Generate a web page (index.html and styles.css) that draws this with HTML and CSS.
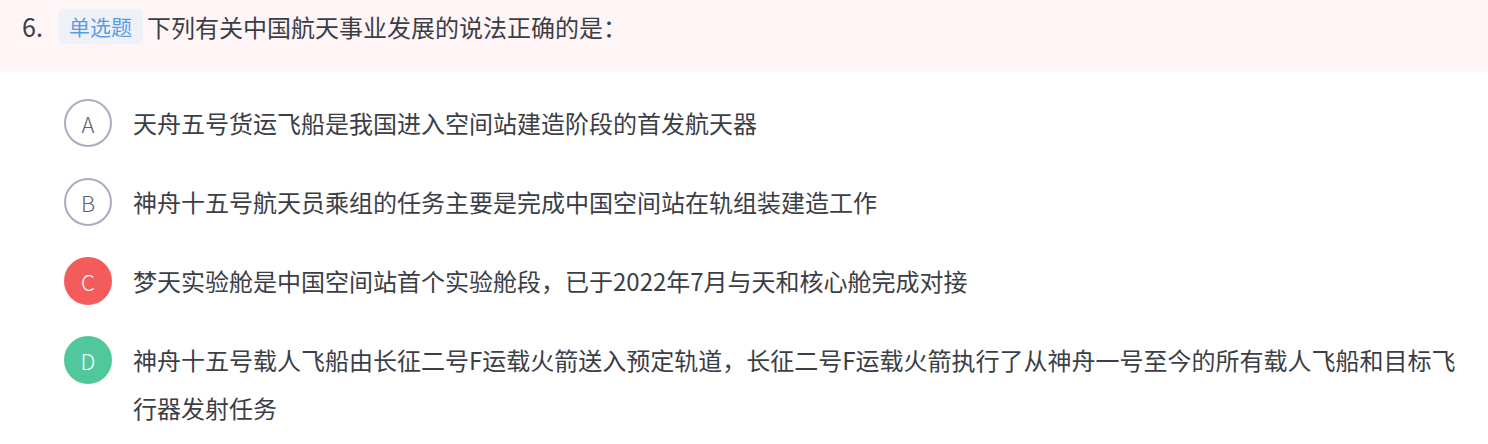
FILE: index.html
```html
<!DOCTYPE html>
<html lang="zh-CN">
<head>
<meta charset="utf-8">
<link rel="stylesheet" href="styles.css">
</head>
<body>
<div class="question">
  <div class="q-head">
    <span class="q-num">6.</span>
    <span class="q-tag">单选题</span>
    <span class="q-title">下列有关中国航天事业发展的说法正确的是：</span>
  </div>
  <div class="options">
    <div class="option">
      <span class="opt-key">A</span>
      <span class="opt-text">天舟五号货运飞船是我国进入空间站建造阶段的首发航天器</span>
    </div>
    <div class="option">
      <span class="opt-key">B</span>
      <span class="opt-text">神舟十五号航天员乘组的任务主要是完成中国空间站在轨组装建造工作</span>
    </div>
    <div class="option">
      <span class="opt-key wrong">C</span>
      <span class="opt-text">梦天实验舱是中国空间站首个实验舱段，已于2022年7月与天和核心舱完成对接</span>
    </div>
    <div class="option">
      <span class="opt-key right">D</span>
      <span class="opt-text">神舟十五号载人飞船由长征二号F运载火箭送入预定轨道，长征二号F运载火箭执行了从神舟一号至今的所有载人飞船和目标飞行器发射任务</span>
    </div>
  </div>
</div>
</body>
</html>
```

FILE: styles.css
```css
html, body {
  margin: 0;
  padding: 0;
  background: #ffffff;
}
body {
  font-family: "Noto Sans CJK SC", "Noto Sans", sans-serif;
  color: #3b3e45;
  width: 1488px;
}
.q-head {
  display: flex;
  align-items: center;
  height: 72px;
  box-sizing: border-box;
  padding: 9px 0 28px 22px;
  background: #fff5f6;
}
.q-num {
  font-size: 25px;
  line-height: 35px;
  width: 36px;
}
.q-tag {
  font-size: 21px;
  line-height: 35px;
  height: 35px;
  padding: 0 11px;
  background: #eef2f8;
  color: #5b9be4;
  border-radius: 6px;
  margin-right: 4px;
}
.q-title {
  font-size: 24px;
  line-height: 35px;
}
.options {
  display: flex;
  flex-direction: column;
  gap: 31px;
  padding: 27px 20px 0 64px;
}
.option {
  display: flex;
  align-items: flex-start;
  gap: 21px;
}
.opt-key {
  flex: none;
  width: 48px;
  height: 48px;
  box-sizing: border-box;
  border: 2px solid #a9adbd;
  border-radius: 50%;
  display: flex;
  align-items: center;
  justify-content: center;
  font-size: 22px;
  font-weight: 300;
  color: #5d6378;
}
.opt-key.wrong {
  background: #f45c5c;
  border-color: #f45c5c;
  color: #ffffff;
}
.opt-key.right {
  background: #50c89c;
  border-color: #50c89c;
  color: #ffffff;
}
.opt-text {
  font-size: 24px;
  line-height: 48px;
}
```
